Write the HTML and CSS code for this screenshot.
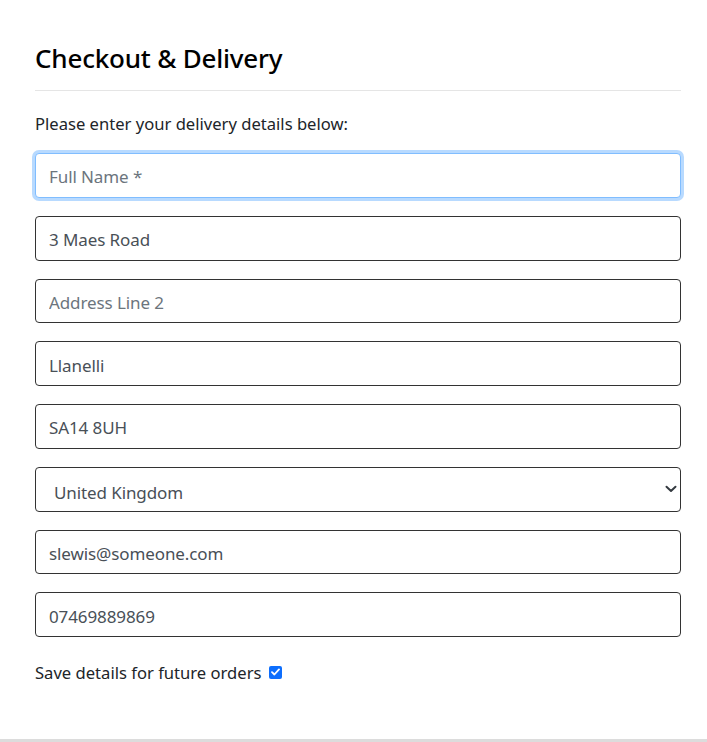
FILE: index.html
```html
<!DOCTYPE html>
<html lang="en">
<head>
<meta charset="utf-8">
<title>Checkout &amp; Delivery</title>
<link rel="stylesheet" href="styles.css">
</head>
<body>
<main class="page">
  <h1 class="title">Checkout &amp; Delivery</h1>
  <hr class="rule">
  <p class="intro">Please enter your delivery details below:</p>
  <form class="form">
    <input class="field focused" type="text" placeholder="Full Name *">
    <input class="field" type="text" value="3 Maes Road">
    <input class="field" type="text" placeholder="Address Line 2">
    <input class="field" type="text" value="Llanelli">
    <input class="field" type="text" value="SA14 8UH">
    <div class="select-wrap">
      <select class="field select">
        <option>United Kingdom</option>
      </select>
      <svg class="chev" width="12" height="8" viewBox="0 0 12 8"><path d="M1.5 1.8 L6 6 L10.5 1.8" fill="none" stroke="#343a40" stroke-width="2" stroke-linecap="round" stroke-linejoin="round"/></svg>
    </div>
    <input class="field" type="email" value="slewis@someone.com">
    <input class="field" type="tel" value="07469889869">
    <label class="save">Save details for future orders <span class="check"><svg width="9" height="8" viewBox="0 0 9 8"><path d="M1 4.2 L3.4 6.5 L8 1.4" fill="none" stroke="#fff" stroke-width="1.8" stroke-linecap="round" stroke-linejoin="round"/></svg></span></label>
  </form>
</main>
<div class="bottom"></div>
</body>
</html>
```
FILE: styles.css
```css
html, body { margin: 0; padding: 0; background: #fff; }
body { font-family: "Noto Sans", "Open Sans", sans-serif; color: #212529; height: 742px; display: flex; flex-direction: column; }
.page { flex: 1; padding: 37px 26px 0 35px; display: flex; flex-direction: column; }
.title { font-size: 26px; font-weight: 500; margin: 0; line-height: 42px; color: #000; letter-spacing: -0.2px; }
.rule { border: 0; border-top: 1px solid #e5e5e5; margin: 11px 0 0; }
.intro { margin: 21px 0 0; font-size: 16.6px; line-height: 24px; letter-spacing: 0; }
.form { display: flex; flex-direction: column; margin-top: 17px; }
.field { box-sizing: border-box; width: 100%; height: 44.75px; margin: 0 0 18px; padding: 3px 13px 0; border: 1px solid #333; border-radius: 4px; font-family: inherit; font-size: 17px; color: #495057; background: #fff; outline: none; letter-spacing: -0.1px; }
.field::placeholder { color: #6c757d; }
.field.focused { border-color: #80bdff; box-shadow: 0 0 0 3px rgba(0, 123, 255, .28); }
.select-wrap { position: relative; }
.select { appearance: none; -webkit-appearance: none; padding-left: 18px; padding-top: 6px; }
.chev { position: absolute; right: 4px; top: 18px; pointer-events: none; }
.save { display: flex; align-items: center; gap: 8px; margin-top: 6px; font-size: 16.6px; line-height: 24px; color: #212529; }
.check { width: 13px; height: 13px; border-radius: 2px; background: #0d6efd; display: inline-flex; align-items: center; justify-content: center; margin-top: -2px; }
.bottom { height: 3px; background: #dcdcdc; }
```
